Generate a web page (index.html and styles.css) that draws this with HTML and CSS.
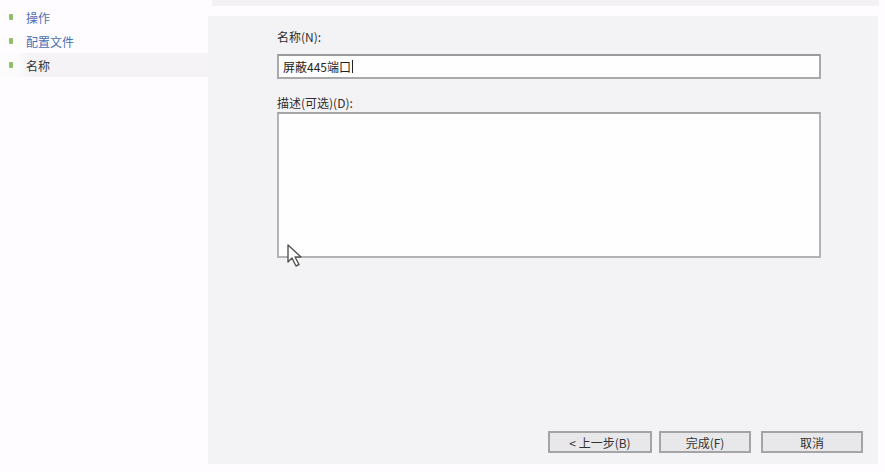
FILE: index.html
```html
<!DOCTYPE html>
<html lang="zh-CN">

<head>
    <meta charset="UTF-8">
    <title>新建出站规则向导</title>
    <link rel="stylesheet" href="styles.css">
</head>

<body>
    <div class="top-strip"></div>
    <div class="wizard">
        <ul class="steps">
            <li class="step"><span class="dot"></span><span class="link">操作</span></li>
            <li class="step"><span class="dot"></span><span class="link">配置文件</span></li>
            <li class="step current"><span class="dot"></span><span>名称</span></li>
        </ul>

        <div class="page">
            <div class="form">
                <label class="label">名称(N):</label>
                <div class="input">屏蔽445端口<span class="caret"></span></div>
                <label class="label">描述(可选)(D):</label>
                <div class="textarea">
                    <svg class="pointer" width="18" height="24" viewBox="0 0 18 24">
                        <path d="M1 1 L1 18 L5 14 L9 22 L12 20.5 L8 13 L14 13 Z" fill="#fff" stroke="#555" stroke-width="1.4" stroke-linejoin="round" />
                    </svg>
                </div>
            </div>

            <div class="buttons">
                <button class="btn back">&lt; 上一步(B)</button>
                <button class="btn finish">完成(F)</button>
                <button class="btn cancel">取消</button>
            </div>
        </div>
    </div>
</body>

</html>
```

FILE: styles.css
```css
* {
    box-sizing: border-box;
}

body {
    margin: 0;
    width: 885px;
    height: 472px;
    background: #fefcfe;
    font-family: "Noto Sans CJK SC", "Liberation Sans", sans-serif;
    font-size: 12px;
    color: #333;
    overflow: hidden;
}

.top-strip {
    height: 6px;
    margin-left: 212px;
    margin-right: 6px;
    background: #f3f1f4;
}

.wizard {
    display: flex;
    height: 448px;
    margin-top: 10px;
}

.steps {
    list-style: none;
    margin: 0;
    padding: 0;
    width: 208px;
    flex-shrink: 0;
}

.step {
    display: flex;
    align-items: center;
    height: 24px;
    padding-left: 9px;
    margin-top: -8px;
    margin-bottom: 8px;
}

.step:first-child {
    margin-top: -11px;
}

.step.current {
    background: linear-gradient(to right, #fdfcfd 8%, #f5f3f6 14%, #f5f3f6 100%);
}

.dot {
    width: 4px;
    height: 6px;
    background: #8cc06a;
    border-radius: 1px;
    margin-right: 13px;
}

.link {
    color: #4a6fb4;
}

.page {
    flex: 1;
    margin-right: 7px;
    background: #f3f2f5;
    display: flex;
    flex-direction: column;
    justify-content: space-between;
    padding: 12px 0 11px 69px;
}

.form {
    display: flex;
    flex-direction: column;
    width: 544px;
}

.label {
    line-height: 18px;
    color: #2e2e2e;
}

.input {
    height: 25px;
    margin-top: 8px;
    margin-bottom: 15px;
    background: #fefefe;
    border: 2px solid #a9a9ab;
    border-top-color: #9a9a9c;
    padding: 0 4px;
    line-height: 21px;
    color: #222;
    display: flex;
    align-items: center;
}

.caret {
    width: 1px;
    height: 13px;
    background: #222;
    margin-left: 1px;
}

.textarea {
    position: relative;
    height: 146px;
    background: #fefefe;
    border: 2px solid #b4b4b6;
    border-top-color: #a5a5a7;
}

.pointer {
    position: absolute;
    left: 8px;
    top: 130px;
}

.buttons {
    display: flex;
    justify-content: flex-end;
    margin-right: 15px;
}

.btn {
    font-family: inherit;
    font-size: 12px;
    color: #333;
    height: 22px;
    width: 104px;
    padding: 0;
    background: #e8e7ea;
    border: 2px solid #a4a4a6;
}

.finish {
    width: 92px;
    margin-left: 7px;
    margin-right: 10px;
}

.cancel {
    width: 102px;
}
```
